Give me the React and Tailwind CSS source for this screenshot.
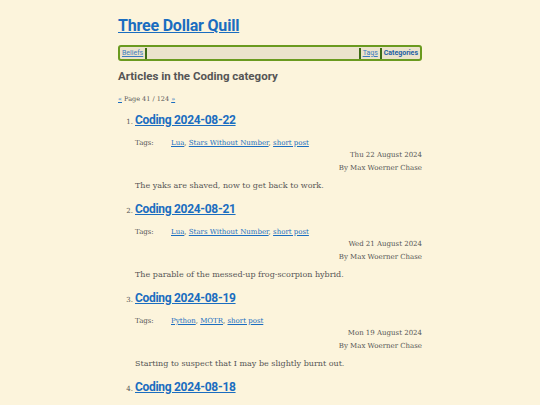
import React from 'react';

const POSTS = [
  {
    title: 'Coding 2024-08-22',
    tags: ['Lua', 'Stars Without Number', 'short post'],
    date: 'Thu 22 August 2024',
    summary: 'The yaks are shaved, now to get back to work.',
  },
  {
    title: 'Coding 2024-08-21',
    tags: ['Lua', 'Stars Without Number', 'short post'],
    date: 'Wed 21 August 2024',
    summary: 'The parable of the messed-up frog-scorpion hybrid.',
  },
  {
    title: 'Coding 2024-08-19',
    tags: ['Python', 'MOTR', 'short post'],
    date: 'Mon 19 August 2024',
    summary: 'Starting to suspect that I may be slightly burnt out.',
  },
  {
    title: 'Coding 2024-08-18',
    tags: ['Python', 'MOTR', 'short post'],
    date: 'Sun 18 August 2024',
    summary: 'More work on the thing.',
  },
];

const sans = { fontFamily: 'Roboto, "Noto Sans", sans-serif' };
const serif = { fontFamily: '"DejaVu Serif", "Liberation Serif", serif' };

function Post({ post, n }) {
  return (
    <li className="flex flex-col">
      <div className="flex items-baseline">
        <span className="w-[17px] text-right pr-[2px] text-[7px] text-[#555]" style={serif}>{n}.</span>
        <a href="#" className="text-[12px] font-bold tracking-[-0.3px] text-[#1a6dc0] underline leading-[18px]" style={sans}>
          {post.title}
        </a>
      </div>
      <div className="pl-[17px] pt-[8px] text-[7px] text-[#555] leading-[12.5px]" style={serif}>
        <div className="flex">
          <span className="w-[36px]">Tags:</span>
          <span>
            {post.tags.map((t, i) => (
              <React.Fragment key={t}>
                <a href="#" className="text-[#1a6dc0] underline">{t}</a>
                {i < post.tags.length - 1 && ', '}
              </React.Fragment>
            ))}
          </span>
        </div>
        <div className="text-right">{post.date}</div>
        <div className="text-right">By Max Woerner Chase</div>
        <p className="mt-[6px] text-[8px]">{post.summary}</p>
      </div>
    </li>
  );
}

export default function App() {
  return (
    <div className="h-[405px] bg-[#fcf4dc] overflow-hidden">
      <div className="mx-auto w-[304px] pt-[14px]">
        <h1 className="text-[16px] font-bold tracking-[-0.2px] leading-[24px]" style={sans}>
          <a href="#" className="text-[#1a6dc0] underline">Three Dollar Quill</a>
        </h1>
        <nav className="mt-[7px] flex items-center h-[16px] rounded-[3px] border-2 border-[#6a9a1f] bg-[#ebe3cc] text-[7px]" style={sans}>
          <a href="#" className="px-[2px] text-[#3b7bbf] underline">Beliefs</a>
          <span className="w-[2px] h-[11px] bg-[#3d6b16]" />
          <span className="flex-1" />
          <span className="w-[2px] h-[11px] bg-[#3d6b16]" />
          <a href="#" className="px-[2px] text-[#3b7bbf] underline">Tags</a>
          <span className="w-[2px] h-[11px] bg-[#3d6b16]" />
          <span className="px-[2px] font-bold text-[#1f5fa3]">Categories</span>
        </nav>
        <h2 className="mt-[5px] text-[11.5px] font-bold text-[#555] leading-[20px]" style={sans}>
          Articles in the Coding category
        </h2>
        <div className="mt-[9px] text-[6.5px] text-[#555]" style={serif}>
          <a href="#" className="text-[#1a6dc0] underline">«</a> Page 41 / 124{' '}
          <a href="#" className="text-[#1a6dc0] underline">»</a>
        </div>
        <ol className="mt-[6px] flex flex-col gap-[7px]">
          {POSTS.map((p, i) => (
            <Post key={p.title} post={p} n={i + 1} />
          ))}
        </ol>
      </div>
    </div>
  );
}
